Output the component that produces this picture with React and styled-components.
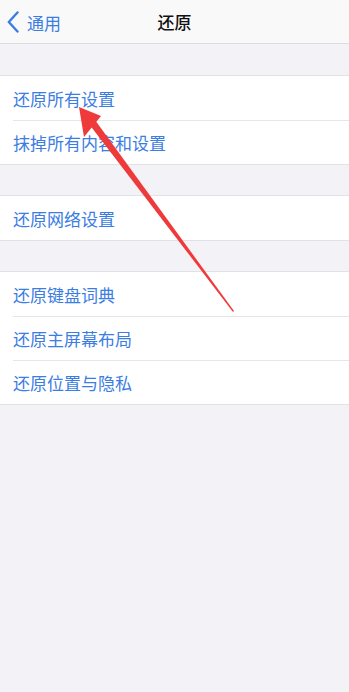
import React from 'react'
import styled, { createGlobalStyle } from 'styled-components'

const Global = createGlobalStyle`
  html, body {
    margin: 0;
    padding: 0;
    background: #f2f2f7;
  }
  body {
    font-family: "Noto Sans CJK SC", "Noto Sans", sans-serif;
  }
`

const Screen = styled.div`
  position: relative;
  width: 349px;
  height: 692px;
  background: #f2f2f7;
  overflow: hidden;
`

const NavBar = styled.div`
  height: 44px;
  box-sizing: border-box;
  display: flex;
  align-items: center;
  justify-content: center;
  position: relative;
  background: #f9f9f9;
  border-bottom: 1px solid #dcdce0;
`

const Back = styled.div`
  position: absolute;
  left: 7px;
  top: 0;
  height: 44px;
  display: flex;
  align-items: center;
  gap: 8px;
  color: #3b7de3;
  font-size: 17px;
`

const Title = styled.div`
  font-size: 17px;
  font-weight: 500;
  color: #111;
`

const Group = styled.div`
  margin-top: ${p => p.gap}px;
  background: #fff;
  border-top: 1px solid #e2e2e6;
  border-bottom: 1px solid #e2e2e6;
`

const Row = styled.div`
  height: 44px;
  margin-left: 13px;
  display: flex;
  align-items: center;
  font-size: 17px;
  color: #3b7de3;
  box-sizing: border-box;
  border-top: ${p => (p.first ? 'none' : '1px solid #e6e6ea')};
`

const Arrow = styled.svg`
  position: absolute;
  left: 0;
  top: 0;
  pointer-events: none;
`

const groups = [
  { gap: 31, rows: ['还原所有设置', '抹掉所有内容和设置'] },
  { gap: 30, rows: ['还原网络设置'] },
  { gap: 30, rows: ['还原键盘词典', '还原主屏幕布局', '还原位置与隐私'] },
]

export default function App() {
  return (
    <Screen>
      <Global />
      <NavBar>
        <Back>
          <svg width="12" height="22" viewBox="0 0 12 22">
            <path d="M10.5 1.5 L1.8 11 L10.5 20.5" fill="none" stroke="#3b7de3" strokeWidth="2.4" strokeLinecap="round" strokeLinejoin="round" />
          </svg>
          通用
        </Back>
        <Title>还原</Title>
      </NavBar>
      {groups.map((g, i) => (
        <Group key={i} gap={g.gap}>
          {g.rows.map((r, j) => (
            <Row key={r} first={j === 0}>{r}</Row>
          ))}
        </Group>
      ))}
      <Arrow width="349" height="692" viewBox="0 0 349 692">
        <polygon points="79,107 101,116 84,137" fill="#ee3a3a" />
        <polygon points="89,124 95,120 234,311 233,312" fill="#ee3a3a" />
      </Arrow>
    </Screen>
  )
}
